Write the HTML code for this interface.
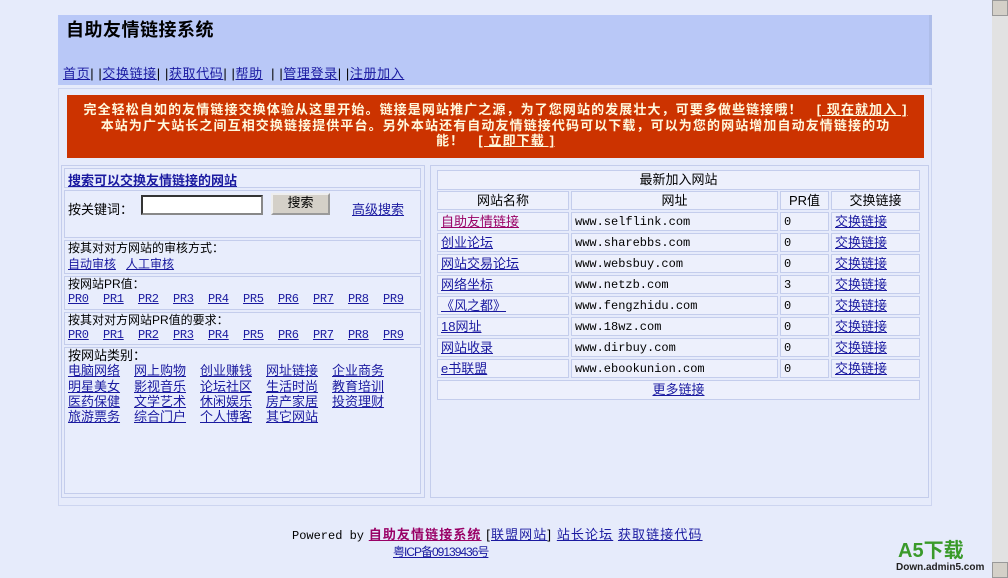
<!DOCTYPE html>
<html><head><meta charset="utf-8"><style>
*{margin:0;padding:0;box-sizing:border-box}
body{width:1008px;height:578px;background:#e6ebfb;font:12px "Liberation Sans","Noto Sans CJK SC",sans-serif;color:#000;position:relative;overflow:hidden}
a{color:#1a1aa0;text-decoration:underline}
.abs{position:absolute;white-space:nowrap}
.box{position:absolute;border:1px solid #c4cdec;background:#e8edfc}
.cell{position:absolute;border:1px solid #c4cdec;background:#edf0fc;line-height:18px;padding-left:3px;white-space:nowrap;font-size:13px}
.mono{font-family:"Liberation Mono",monospace;font-size:12px}
.c{text-align:center;padding-left:0}
.pr a{position:absolute;font-family:"Liberation Mono",monospace;font-size:12px;letter-spacing:-0.3px}
</style></head><body>
<div class="abs" style="left:992px;top:0;width:16px;height:578px;background:#e2e2e2"></div>
<div class="abs" style="left:992px;top:0;width:16px;height:16px;background:#d4d0c8;border:1px solid #999"></div>
<div class="abs" style="left:992px;top:562px;width:16px;height:16px;background:#d4d0c8;border:1px solid #999"></div>

<div class="abs" style="left:58px;top:15px;width:874px;height:70px;background:#b9c8f7;border-right:3px solid #aebde9"></div>
<div class="abs" style="left:66px;top:16px;font-size:18px;font-weight:bold;letter-spacing:0.5px">自助友情链接系统</div>
<div class="abs" style="left:63px;top:63px;font-size:13px;letter-spacing:0.6px"><a href="#">首页</a>| |<a href="#">交换链接</a>| |<a href="#">获取代码</a>| |<a href="#">帮助</a> &nbsp;| |<a href="#">管理登录</a>| |<a href="#">注册加入</a></div>

<div class="abs" style="left:58px;top:88px;width:874px;height:418px;border:1px solid #cdd5f0"></div>
<div class="abs" style="left:67px;top:95px;width:857px;height:63px;background:#cc3300;color:#fff8dc;font-weight:bold;text-align:center;line-height:15.5px;padding-top:7px;font-size:13px;letter-spacing:1.1px;white-space:normal">
完全轻松自如的友情链接交换体验从这里开始。链接是网站推广之源，为了您网站的发展壮大，可要多做些链接哦！ &nbsp; <span style="text-decoration:underline">[ 现在就加入 ]</span><br>本站为广大站长之间互相交换链接提供平台。另外本站还有自动友情链接代码可以下载，可以为您的网站增加自动友情链接的功<br>能！ &nbsp; <span style="text-decoration:underline">[ 立即下载 ]</span></div>

<div class="abs" style="left:61px;top:165px;width:364px;height:333px;border:1px solid #c4cdec"></div>
<div class="box" style="left:64px;top:168px;width:357px;height:20px"></div>
<div class="abs" style="left:68px;top:170px;font-weight:bold;font-size:13px"><a href="#">搜索可以交换友情链接的网站</a></div>
<div class="box" style="left:64px;top:190px;width:357px;height:48px"></div>
<div class="abs" style="left:68px;top:199px;font-size:13px">按关键词：</div>
<div class="abs" style="left:141px;top:195px;width:122px;height:20px;background:#fff;border:2px inset #888"></div>
<div class="abs" style="left:271px;top:193px;width:59px;height:22px;background:#d4d0c8;border:2px outset #eee;text-align:center;line-height:16px;font-size:13px">搜索</div>
<div class="abs" style="left:352px;top:199px;font-size:13px"><a href="#">高级搜索</a></div>
<div class="box" style="left:64px;top:240px;width:357px;height:34px"></div>
<div class="abs" style="left:68px;top:240px;line-height:16px">按其对对方网站的审核方式：<br><a href="#">自动审核</a> &nbsp; <a href="#">人工审核</a></div>
<div class="box" style="left:64px;top:276px;width:357px;height:34px"></div>
<div class="abs" style="left:68px;top:276px;line-height:16px">按网站PR值：</div>
<div class="pr abs" style="left:68px;top:292px"><a href="#" style="left:0">PR0</a><a href="#" style="left:35px">PR1</a><a href="#" style="left:70px">PR2</a><a href="#" style="left:105px">PR3</a><a href="#" style="left:140px">PR4</a><a href="#" style="left:175px">PR5</a><a href="#" style="left:210px">PR6</a><a href="#" style="left:245px">PR7</a><a href="#" style="left:280px">PR8</a><a href="#" style="left:315px">PR9</a></div>
<div class="box" style="left:64px;top:312px;width:357px;height:33px"></div>
<div class="abs" style="left:68px;top:312px;line-height:16px">按其对对方网站PR值的要求：</div>
<div class="pr abs" style="left:68px;top:328px"><a href="#" style="left:0">PR0</a><a href="#" style="left:35px">PR1</a><a href="#" style="left:70px">PR2</a><a href="#" style="left:105px">PR3</a><a href="#" style="left:140px">PR4</a><a href="#" style="left:175px">PR5</a><a href="#" style="left:210px">PR6</a><a href="#" style="left:245px">PR7</a><a href="#" style="left:280px">PR8</a><a href="#" style="left:315px">PR9</a></div>
<div class="box" style="left:64px;top:347px;width:357px;height:147px"></div>
<div class="abs" style="left:68px;top:348px;line-height:15.3px;font-size:13px">按网站类别：<br>
<div style="display:grid;grid-template-columns:66px 66px 66px 66px 66px">
<a href="#">电脑网络</a><a href="#">网上购物</a><a href="#">创业赚钱</a><a href="#">网址链接</a><a href="#">企业商务</a>
<a href="#">明星美女</a><a href="#">影视音乐</a><a href="#">论坛社区</a><a href="#">生活时尚</a><a href="#">教育培训</a>
<a href="#">医药保健</a><a href="#">文学艺术</a><a href="#">休闲娱乐</a><a href="#">房产家居</a><a href="#">投资理财</a>
<a href="#">旅游票务</a><a href="#">综合门户</a><a href="#">个人博客</a><a href="#">其它网站</a></div></div>

<div class="abs" style="left:430px;top:165px;width:499px;height:333px;border:1px solid #c4cdec"></div>
<div class="cell c" style="left:437px;top:170px;width:483px;height:20px">最新加入网站</div>
<div class="cell c" style="left:437px;top:191px;width:132px;height:19px">网站名称</div>
<div class="cell c" style="left:571px;top:191px;width:207px;height:19px">网址</div>
<div class="cell c" style="left:780px;top:191px;width:49px;height:19px">PR值</div>
<div class="cell c" style="left:831px;top:191px;width:89px;height:19px">交换链接</div>
<div id="rows"></div>
<div class="cell c" style="left:437px;top:380px;width:483px;height:20px"><a href="#">更多链接</a></div>

<div class="abs" style="left:292px;top:524px;font-size:13px;letter-spacing:1.1px"><span class="mono" style="letter-spacing:0">Powered by</span> <a href="#" style="color:#990066;font-weight:bold">自助友情链接系统</a> [<a href="#">联盟网站</a>] <a href="#">站长论坛</a> <a href="#">获取链接代码</a></div>
<div class="abs" style="left:393px;top:543px;font-size:12px;letter-spacing:-1px"><a href="#">粤ICP备09139436号</a></div>
<div class="abs" style="left:898px;top:541px;color:#3a9a2a;font-weight:bold;font-size:20px;line-height:20px">A5下载</div>
<div class="abs" style="left:896px;top:562px;font-size:10px;font-weight:bold;color:#222">Down.admin5.com</div>
<script>
var d=[["自助友情链接","www.selflink.com","0"],["创业论坛","www.sharebbs.com","0"],["网站交易论坛","www.websbuy.com","0"],["网络坐标","www.netzb.com","3"],["《风之都》","www.fengzhidu.com","0"],["18网址","www.18wz.com","0"],["网站收录","www.dirbuy.com","0"],["e书联盟","www.ebookunion.com","0"]];
var h="";d.forEach(function(r,i){var t=212+i*21;
h+='<div class="cell" style="left:437px;top:'+t+'px;width:132px;height:19px"><a href="#"'+(i==0?' style="color:#990066"':'')+'>'+r[0]+'</a></div>'+
'<div class="cell mono" style="left:571px;top:'+t+'px;width:207px;height:19px">'+r[1]+'</div>'+
'<div class="cell mono" style="left:780px;top:'+t+'px;width:49px;height:19px">'+r[2]+'</div>'+
'<div class="cell" style="left:831px;top:'+t+'px;width:89px;height:19px"><a href="#">交换链接</a></div>';});
document.getElementById("rows").innerHTML=h;
</script>
</body></html>
